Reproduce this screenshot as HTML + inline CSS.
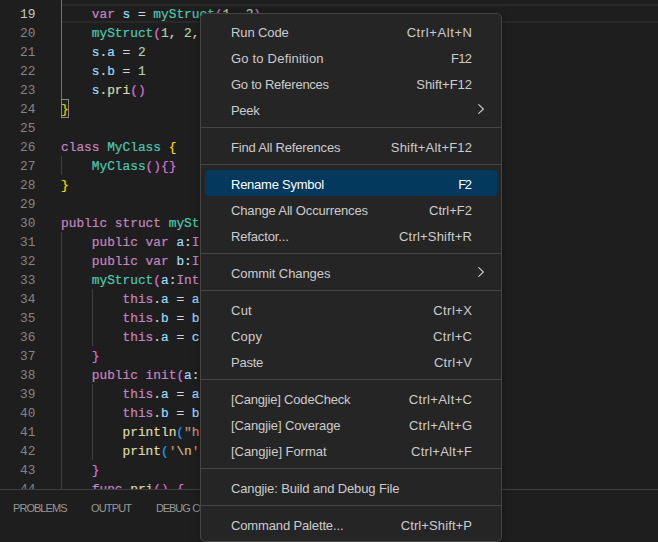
<!DOCTYPE html>
<html><head><meta charset="utf-8">
<style>
html,body{margin:0;padding:0;}
body{width:658px;height:542px;overflow:hidden;background:#1e1e1e;position:relative;}
.ed{position:absolute;left:0;top:0;width:658px;height:489px;overflow:hidden;background:#1e1e1e;}
.ln{position:absolute;left:0;width:35.5px;text-align:right;height:19px;line-height:19px;padding-top:1px;font-family:"Liberation Mono",monospace;font-size:12.82px;color:#858585;}
.ln.act{color:#c6c6c6;}
.cl{position:absolute;left:61px;height:19px;line-height:19px;padding-top:1px;font-family:"Liberation Mono",monospace;font-size:12.82px;color:#d4d4d4;white-space:pre;-webkit-text-stroke:0.2px currentColor;}
.hl{position:absolute;left:61px;top:4px;width:597px;height:15px;border-top:2px solid #282828;border-bottom:2px solid #282828;}
.g{position:absolute;width:1px;background:#404040;}
.g.a{background:#707070;}
.k{color:#c586c0}.t{color:#4ec9b0}.v{color:#9cdcfe}.n{color:#b5cea8}.f{color:#dcdcaa}.s{color:#ce9178}.e{color:#d7ba7d}
.b1{color:#ffd700}.b2{color:#da70d6}.b3{color:#179fff}
.bx{position:absolute;left:61px;top:99px;width:6px;height:17px;border:1px solid #888;background:rgba(0,100,0,0.1);}
.panel{position:absolute;left:0;top:489px;width:658px;height:53px;background:#1e1e1e;border-top:1px solid #404040;}
.tab{position:absolute;top:8px;font-family:"Liberation Sans",sans-serif;font-size:11px;color:#979797;line-height:20px;}
.menu{position:absolute;left:200px;top:13px;width:300px;height:527px;background:#252526;border:1px solid #454545;border-radius:5px;box-shadow:0 2px 8px rgba(0,0,0,0.36);}
.mi{position:absolute;left:4px;width:292px;height:26px;border-radius:4px;font-family:"Liberation Sans",sans-serif;font-size:13px;color:#cccccc;line-height:26px;}
.mi .l{position:absolute;left:26px;top:2px;}
.mi .r{position:absolute;right:25px;top:2px;}
.mi.sel{background:#04395e;color:#ffffff;}
.sep{position:absolute;left:0;width:300px;height:1px;background:#454545;}
.arr{position:absolute;left:272px;top:7px;width:8px;height:12px;}
</style></head><body>
<div class="ed">
<div class="hl"></div>
<div class="ln act" style="top:4px">19</div><div class="cl" style="top:4px">    <span class="k">var</span> <span class="v">s</span> = <span class="t">myStruct</span><span class="b2">(</span><span class="n">1</span>, <span class="n">2</span><span class="b2">)</span></div>
<div class="ln" style="top:23px">20</div><div class="cl" style="top:23px">    <span class="t">myStruct</span><span class="b2">(</span><span class="n">1</span>, <span class="n">2</span>, </div>
<div class="ln" style="top:42px">21</div><div class="cl" style="top:42px">    <span class="v">s</span>.<span class="v">a</span> = <span class="n">2</span></div>
<div class="ln" style="top:61px">22</div><div class="cl" style="top:61px">    <span class="v">s</span>.<span class="v">b</span> = <span class="n">1</span></div>
<div class="ln" style="top:80px">23</div><div class="cl" style="top:80px">    <span class="v">s</span>.<span class="f">pri</span><span class="b2">()</span></div>
<div class="ln" style="top:99px">24</div><div class="cl" style="top:99px"><span class="b1">}</span></div>
<div class="ln" style="top:118px">25</div>
<div class="ln" style="top:137px">26</div><div class="cl" style="top:137px"><span class="k">class</span> <span class="t">MyClass</span> <span class="b1">{</span></div>
<div class="ln" style="top:156px">27</div><div class="cl" style="top:156px">    <span class="t">MyClass</span><span class="b2">(){}</span></div>
<div class="ln" style="top:175px">28</div><div class="cl" style="top:175px"><span class="b1">}</span></div>
<div class="ln" style="top:194px">29</div>
<div class="ln" style="top:213px">30</div><div class="cl" style="top:213px"><span class="k">public</span> <span class="k">struct</span> <span class="t">myStruct</span></div>
<div class="ln" style="top:232px">31</div><div class="cl" style="top:232px">    <span class="k">public</span> <span class="k">var</span> <span class="v">a</span>:<span class="k">Int64</span></div>
<div class="ln" style="top:251px">32</div><div class="cl" style="top:251px">    <span class="k">public</span> <span class="k">var</span> <span class="v">b</span>:<span class="k">Int64</span></div>
<div class="ln" style="top:270px">33</div><div class="cl" style="top:270px">    <span class="t">myStruct</span><span class="b2">(</span><span class="v">a</span>:<span class="k">Int64</span></div>
<div class="ln" style="top:289px">34</div><div class="cl" style="top:289px">        <span class="k">this</span>.<span class="v">a</span> = <span class="v">a</span></div>
<div class="ln" style="top:308px">35</div><div class="cl" style="top:308px">        <span class="k">this</span>.<span class="v">b</span> = <span class="v">b</span></div>
<div class="ln" style="top:327px">36</div><div class="cl" style="top:327px">        <span class="k">this</span>.<span class="v">a</span> = <span class="v">c</span></div>
<div class="ln" style="top:346px">37</div><div class="cl" style="top:346px">    <span class="b2">}</span></div>
<div class="ln" style="top:365px">38</div><div class="cl" style="top:365px">    <span class="k">public</span> <span class="k">init</span><span class="b2">(</span><span class="v">a</span>:<span class="k">Int64</span></div>
<div class="ln" style="top:384px">39</div><div class="cl" style="top:384px">        <span class="k">this</span>.<span class="v">a</span> = <span class="v">a</span></div>
<div class="ln" style="top:403px">40</div><div class="cl" style="top:403px">        <span class="k">this</span>.<span class="v">b</span> = <span class="v">b</span></div>
<div class="ln" style="top:422px">41</div><div class="cl" style="top:422px">        <span class="f">println</span><span class="b3">(</span><span class="s">"hello"</span></div>
<div class="ln" style="top:441px">42</div><div class="cl" style="top:441px">        <span class="f">print</span><span class="b3">(</span><span class="s">'</span><span class="e">\n</span><span class="s">'</span></div>
<div class="ln" style="top:460px">43</div><div class="cl" style="top:460px">    <span class="b2">}</span></div>
<div class="ln" style="top:479px">44</div><div class="cl" style="top:479px">    <span class="k">func</span> <span class="f">pri</span><span class="b2">()</span> <span class="b2">{</span></div>
<div class="g a" style="left:61px;top:0px;height:99px"></div>
<div class="g" style="left:61px;top:156px;height:19px"></div>
<div class="g" style="left:61px;top:232px;height:257px"></div>
<div class="g" style="left:92px;top:289px;height:57px"></div>
<div class="g" style="left:92px;top:384px;height:76px"></div>
<div class="bx"></div>
</div>
<div class="panel">
<div class="tab" style="left:13px;letter-spacing:-0.95px">PROBLEMS</div>
<div class="tab" style="left:91px;letter-spacing:-0.83px">OUTPUT</div>
<div class="tab" style="left:156px;letter-spacing:-1.1px;word-spacing:0.6px">DEBUG CONSOLE</div>
</div>
<div class="menu">
<div class="mi" style="top:4px"><span class="l" style="letter-spacing:-0.100px">Run Code</span><span class="r" style="letter-spacing:0.600px;margin-right:-0.600px">Ctrl+Alt+N</span></div>
<div class="mi" style="top:30px"><span class="l" style="letter-spacing:0.200px">Go to Definition</span><span class="r" style="letter-spacing:-0.700px;margin-right:0.700px">F12</span></div>
<div class="mi" style="top:56px"><span class="l" style="letter-spacing:-0.253px">Go to References</span><span class="r" style="letter-spacing:-0.037px;margin-right:0.037px">Shift+F12</span></div>
<div class="mi" style="top:82px"><span class="l" style="letter-spacing:-0.333px">Peek</span><svg class="arr" viewBox="0 0 8 12"><path d="M1.7 1.7 L6.4 6 L1.7 10.3" fill="none" stroke="#cccccc" stroke-width="1.1" stroke-linecap="round" stroke-linejoin="round"/></svg></div>
<div class="mi" style="top:119px"><span class="l" style="letter-spacing:-0.183px">Find All References</span><span class="r" style="letter-spacing:0.200px;margin-right:-0.200px">Shift+Alt+F12</span></div>
<div class="mi sel" style="top:156px"><span class="l" style="letter-spacing:-0.250px">Rename Symbol</span><span class="r" style="letter-spacing:-1.400px;margin-right:1.400px">F2</span></div>
<div class="mi" style="top:182px"><span class="l" style="letter-spacing:-0.152px">Change All Occurrences</span><span class="r" style="letter-spacing:0.000px;margin-right:-0.000px">Ctrl+F2</span></div>
<div class="mi" style="top:208px"><span class="l" style="letter-spacing:-0.150px">Refactor...</span><span class="r" style="letter-spacing:0.200px;margin-right:-0.200px">Ctrl+Shift+R</span></div>
<div class="mi" style="top:245px"><span class="l" style="letter-spacing:-0.077px">Commit Changes</span><svg class="arr" viewBox="0 0 8 12"><path d="M1.7 1.7 L6.4 6 L1.7 10.3" fill="none" stroke="#cccccc" stroke-width="1.1" stroke-linecap="round" stroke-linejoin="round"/></svg></div>
<div class="mi" style="top:282px"><span class="l" style="letter-spacing:0.250px">Cut</span><span class="r" style="letter-spacing:0.460px;margin-right:-0.460px">Ctrl+X</span></div>
<div class="mi" style="top:308px"><span class="l" style="letter-spacing:0.233px">Copy</span><span class="r" style="letter-spacing:0.360px;margin-right:-0.360px">Ctrl+C</span></div>
<div class="mi" style="top:334px"><span class="l" style="letter-spacing:-0.250px">Paste</span><span class="r" style="letter-spacing:0.320px;margin-right:-0.320px">Ctrl+V</span></div>
<div class="mi" style="top:371px"><span class="l" style="letter-spacing:-0.183px">[Cangjie] CodeCheck</span><span class="r" style="letter-spacing:0.378px;margin-right:-0.378px">Ctrl+Alt+C</span></div>
<div class="mi" style="top:397px"><span class="l" style="letter-spacing:-0.100px">[Cangjie] Coverage</span><span class="r" style="letter-spacing:0.267px;margin-right:-0.267px">Ctrl+Alt+G</span></div>
<div class="mi" style="top:423px"><span class="l" style="letter-spacing:-0.040px">[Cangjie] Format</span><span class="r" style="letter-spacing:0.278px;margin-right:-0.278px">Ctrl+Alt+F</span></div>
<div class="mi" style="top:460px"><span class="l" style="letter-spacing:-0.125px">Cangjie: Build and Debug File</span></div>
<div class="mi" style="top:497px"><span class="l" style="letter-spacing:-0.141px">Command Palette...</span><span class="r" style="letter-spacing:0.109px;margin-right:-0.109px">Ctrl+Shift+P</span></div>
<div class="sep" style="top:113px"></div>
<div class="sep" style="top:150px"></div>
<div class="sep" style="top:239px"></div>
<div class="sep" style="top:276px"></div>
<div class="sep" style="top:365px"></div>
<div class="sep" style="top:454px"></div>
<div class="sep" style="top:491px"></div>
</div>
</body></html>
